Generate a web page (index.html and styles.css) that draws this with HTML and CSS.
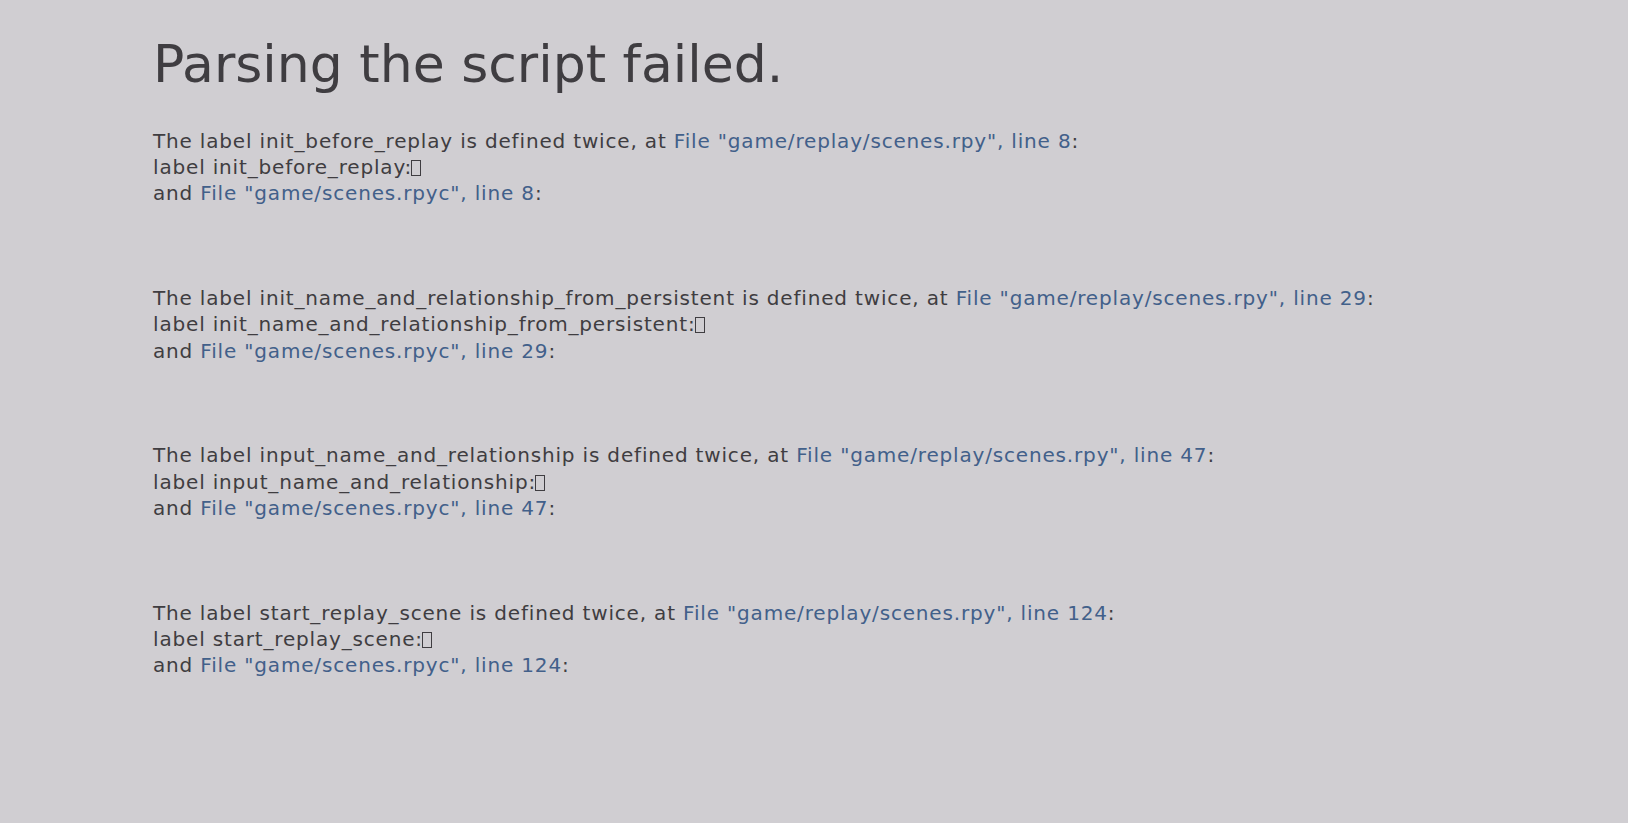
FILE: index.html
```html
<!DOCTYPE html>
<html>
<head>
<meta charset="utf-8">
<link rel="stylesheet" href="styles.css">
</head>
<body>
<main class="page">
  <h1 class="title">Parsing the script failed.</h1>
  <section class="errors">
    <div class="error">
      <p class="line">The label init_before_replay is defined twice, at <a class="link">File "game/replay/scenes.rpy", line 8</a>:</p>
      <p class="line">label init_before_replay:<span class="tofu"></span></p>
      <p class="line">and <a class="link">File "game/scenes.rpyc", line 8</a>:</p>
    </div>
    <div class="error">
      <p class="line">The label init_name_and_relationship_from_persistent is defined twice, at <a class="link">File "game/replay/scenes.rpy", line 29</a>:</p>
      <p class="line">label init_name_and_relationship_from_persistent:<span class="tofu"></span></p>
      <p class="line">and <a class="link">File "game/scenes.rpyc", line 29</a>:</p>
    </div>
    <div class="error">
      <p class="line">The label input_name_and_relationship is defined twice, at <a class="link">File "game/replay/scenes.rpy", line 47</a>:</p>
      <p class="line">label input_name_and_relationship:<span class="tofu"></span></p>
      <p class="line">and <a class="link">File "game/scenes.rpyc", line 47</a>:</p>
    </div>
    <div class="error">
      <p class="line">The label start_replay_scene is defined twice, at <a class="link">File "game/replay/scenes.rpy", line 124</a>:</p>
      <p class="line">label start_replay_scene:<span class="tofu"></span></p>
      <p class="line">and <a class="link">File "game/scenes.rpyc", line 124</a>:</p>
    </div>
  </section>
</main>
</body>
</html>
```
FILE: styles.css
```css
html, body {
  margin: 0;
  padding: 0;
  background: #d0ced2;
  height: 100%;
}
body {
  font-family: "DejaVu Sans", sans-serif;
  color: #3f3d41;
}
.page {
  padding: 34px 0 0 153px;
  display: flex;
  flex-direction: column;
}
.title {
  margin: 0;
  font-size: 52px;
  font-weight: normal;
  line-height: normal;
}
.errors {
  margin-top: 34px;
  display: flex;
  flex-direction: column;
  gap: 78.6px;
  font-size: 20px;
  line-height: 26.2px;
  letter-spacing: 0.83px;
}
.line {
  margin: 0;
  white-space: nowrap;
}
.link {
  color: #42608a;
  text-decoration: none;
}
.tofu {
  display: inline-block;
  width: 8px;
  height: 14px;
  border: 1.3px solid #3f3d41;
  margin-left: -1px;
  vertical-align: -2px;
}
```
